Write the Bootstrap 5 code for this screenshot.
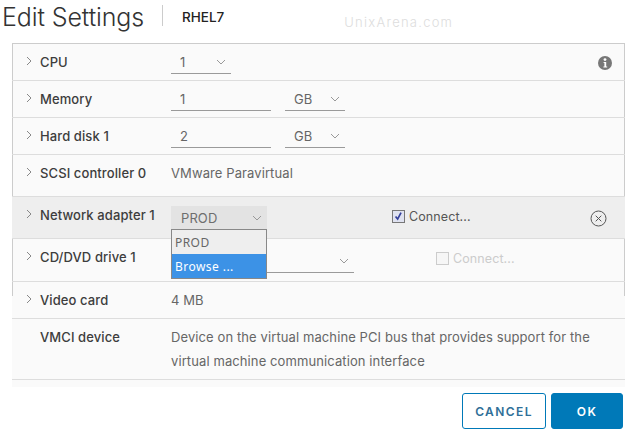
<!DOCTYPE html>
<html lang="en"><head><meta charset="utf-8"><title>Edit Settings</title>
<link href="https://cdn.jsdelivr.net/npm/bootstrap@5.3.0/dist/css/bootstrap.min.css" rel="stylesheet">
<style>
html,body{width:628px;height:431px;overflow:hidden;background:#fff}
body{font-family:Inter,"Liberation Sans",sans-serif;color:#565656;font-size:13px;letter-spacing:.1px;line-height:16px}
.head-bar{height:43px;padding-left:2px;position:relative}
.head-title{font-size:25px;line-height:32px;font-weight:300;color:#333;letter-spacing:-.1px;width:160px;padding-top:1px}
.head-sep{width:1px;height:21px;background:#ccc;margin-top:5px}
.head-vm{font-size:13.5px;font-weight:500;color:#222;margin-left:19px;margin-top:9px;letter-spacing:0}
.mark-text{font-size:13px;letter-spacing:1.25px;color:#ddd;font-weight:300;margin-left:120px;margin-top:14px}
.panel-box{margin-left:12px;width:613px;height:344px;border-top:1px solid #ccc;
 background:linear-gradient(#ccc,#ccc) left top/1px 252px no-repeat,linear-gradient(#ccc,#ccc) right top/1px 252px no-repeat,#fafafa}
.hw-row{border-bottom:1px solid #ddd;padding:10px 0 0 14px;position:relative}
.h37{height:37px}.h42{height:42px}.h43{height:43px}.h61{height:61px}
.active-row{background:#eee}
.caret-col{width:14px;flex:none;padding-top:2px}
.caret-col svg{display:block}
.hw-label{width:131px;flex:none;color:#3d3d3d;font-weight:500}
.hw-value{color:#666}
.desc-lines{line-height:24px;margin-top:-4px}
.plain-sel,.plain-num{border:0;border-bottom:1px solid #9a9a9a;border-radius:0;background-color:transparent;color:#666;font-size:13px;line-height:16px;box-shadow:none;padding:0 0 3px 9px;height:20px}
.plain-sel{background-image:url("data:image/svg+xml,%3Csvg xmlns='http://www.w3.org/2000/svg' width='10' height='6'%3E%3Cpath d='M1 1l4 4 4-4' fill='none' stroke='%23999'/%3E%3C/svg%3E");background-position:right 5px top 5px;background-size:10px 6px;padding-right:20px}
.w60{width:60px}.w100{width:100px}.w183{width:183px}
.gap-unit{margin-left:14px}
.net-sel{width:96px;height:23px;background-color:#e3e3e3;border:0;padding:4px 0 0 10px;color:#6e6e6e;background-position:right 5px top 9px;border-radius:0;margin-top:-1px}
.net-menu{left:0;top:22px;width:96px;min-width:0;padding:0;border:1px solid #888;border-radius:0;background:#eee;font-size:12px;letter-spacing:.45px;z-index:5;margin:0}
.net-menu .dropdown-item{padding:0 3px;line-height:25px;height:24px;color:#666;font-family:"Noto Sans",sans-serif}
.net-menu .dropdown-item.active{background:#3c92e6;color:#fff;height:24px}
.form-check-input.tick-box{width:13px;height:13px;margin:0;border:1px solid #777;border-radius:0;background-color:#e8e8ef;flex:none}
.form-check-input.tick-box:checked{background-color:#dfe2f0;border-color:#777;background-image:url("data:image/svg+xml,%3Csvg xmlns='http://www.w3.org/2000/svg' viewBox='0 0 13 13'%3E%3Cpath d='M3 6.5l2.5 3L9.5 2' fill='none' stroke='%23333f9a' stroke-width='2'/%3E%3C/svg%3E");background-size:100%}
.form-check-input.tick-box:disabled{background-color:#f6f6f6;border-color:#ccc;opacity:1}
.conn-one{position:absolute;left:380px;top:10px;font-size:12.5px}
.conn-two{position:absolute;left:424px;top:10px;font-size:12.5px}
.conn-one span,.conn-two span{margin-top:2px}
.conn-off{color:#ccc}
.row-x{position:absolute;left:578px;top:13px;line-height:0}
.row-i{position:absolute;left:586px;top:12px;line-height:0}
.foot-bar{padding:6px 5px 0 0}
.act-btn{height:36px;font-size:12px;font-weight:600;letter-spacing:1.4px;border-radius:3px;padding:0;line-height:35px;font-family:Inter,sans-serif}
.act-cancel{width:84px;border:1px solid #0079b8;color:#2f6f98;background:#fff}
.act-ok{width:72px;border:1px solid #0079b8;background:#0079b8;color:#fff;margin-left:5px}
</style></head><body>
<div class="head-bar d-flex align-items-start">
 <div class="head-title">Edit Settings</div><div class="head-sep"></div><div class="head-vm">RHEL7</div><div class="mark-text">UnixArena.com</div>
</div>
<div class="panel-box">
 <div class="hw-row h37 d-flex">
  <div class="caret-col"><svg width="6" height="10" viewBox="0 0 6 10"><path d="M1 1l4 4-4 4" fill="none" stroke="#888"/></svg></div>
  <div class="hw-label">CPU</div>
  <select class="form-select plain-sel w60"><option>1</option></select>
  <div class="row-i"><svg width="14" height="14" viewBox="0 0 14 14"><circle cx="7" cy="7" r="7" fill="#777"/><circle cx="7" cy="3.6" r="1.4" fill="#fff"/><path d="M5.6 6h2.6v4.4h1v1H5.4v-1h1V7h-.8z" fill="#fff"/></svg></div>
 </div>
 <div class="hw-row h37 d-flex">
  <div class="caret-col"><svg width="6" height="10" viewBox="0 0 6 10"><path d="M1 1l4 4-4 4" fill="none" stroke="#888"/></svg></div>
  <div class="hw-label">Memory</div>
  <input class="form-control plain-num w100" value="1">
  <select class="form-select plain-sel w60 gap-unit"><option>GB</option></select>
 </div>
 <div class="hw-row h37 d-flex">
  <div class="caret-col"><svg width="6" height="10" viewBox="0 0 6 10"><path d="M1 1l4 4-4 4" fill="none" stroke="#888"/></svg></div>
  <div class="hw-label">Hard disk 1</div>
  <input class="form-control plain-num w100" value="2">
  <select class="form-select plain-sel w60 gap-unit"><option>GB</option></select>
 </div>
 <div class="hw-row h42 d-flex">
  <div class="caret-col"><svg width="6" height="10" viewBox="0 0 6 10"><path d="M1 1l4 4-4 4" fill="none" stroke="#888"/></svg></div>
  <div class="hw-label">SCSI controller 0</div>
  <div class="hw-value">VMware Paravirtual</div>
 </div>
 <div class="hw-row h42 d-flex active-row">
  <div class="caret-col"><svg width="6" height="10" viewBox="0 0 6 10"><path d="M1 1l4 4-4 4" fill="none" stroke="#888"/></svg></div>
  <div class="hw-label">Network adapter 1</div>
  <div class="position-relative">
   <div class="form-select plain-sel net-sel">PROD</div>
   <div class="dropdown-menu show net-menu"><a class="dropdown-item" href="#">PROD</a><a class="dropdown-item active" href="#">Browse ...</a></div>
  </div>
  <div class="conn-one d-flex align-items-center gap-1"><input class="form-check-input tick-box" type="checkbox" checked><span>Connect...</span></div>
  <div class="row-x"><svg width="17" height="17" viewBox="0 0 17 17"><circle cx="8.5" cy="8.5" r="7.5" fill="none" stroke="#555"/><path d="M5.7 5.7l5.6 5.6M11.3 5.7l-5.6 5.6" stroke="#555" fill="none"/></svg></div>
 </div>
 <div class="hw-row h43 d-flex">
  <div class="caret-col"><svg width="6" height="10" viewBox="0 0 6 10"><path d="M1 1l4 4-4 4" fill="none" stroke="#888"/></svg></div>
  <div class="hw-label">CD/DVD drive 1</div>
  <select class="form-select plain-sel w183 mt-1"><option></option></select>
  <div class="conn-two d-flex align-items-center gap-1 conn-off"><input class="form-check-input tick-box" type="checkbox" disabled><span>Connect...</span></div>
 </div>
 <div class="hw-row h37 d-flex">
  <div class="caret-col"><svg width="6" height="10" viewBox="0 0 6 10"><path d="M1 1l4 4-4 4" fill="none" stroke="#888"/></svg></div>
  <div class="hw-label">Video card</div>
  <div class="hw-value">4 MB</div>
 </div>
 <div class="hw-row h61 d-flex">
  <div class="caret-col"></div>
  <div class="hw-label">VMCI device</div>
  <div class="hw-value desc-lines">Device on the virtual machine PCI bus that provides support for the<br>virtual machine communication interface</div>
 </div>
</div>
<div class="foot-bar d-flex justify-content-end">
 <button class="btn act-btn act-cancel" type="button">CANCEL</button>
 <button class="btn act-btn act-ok" type="button">OK</button>
</div>
<script src="https://cdn.jsdelivr.net/npm/bootstrap@5.3.0/dist/js/bootstrap.bundle.min.js"></script>
</body></html>
